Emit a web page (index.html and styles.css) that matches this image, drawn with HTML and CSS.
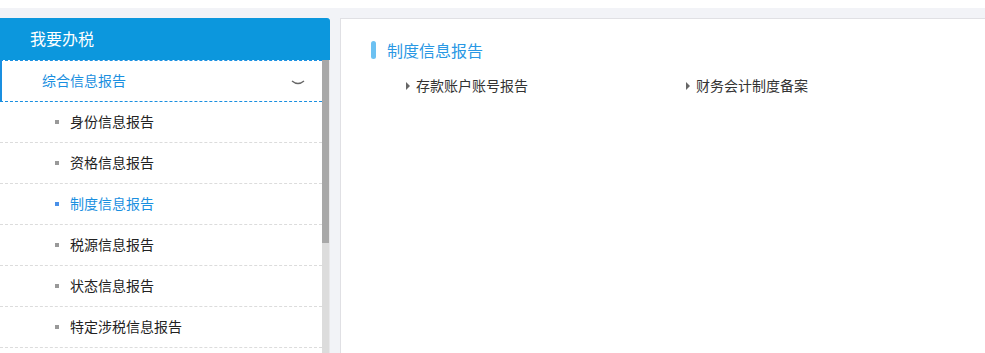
FILE: index.html
```html
<!DOCTYPE html>
<html lang="zh-CN">
<head>
    <meta charset="UTF-8">
    <meta name="viewport" content="width=device-width, initial-scale=1.0">
    <title>我要办税</title>
    <link rel="stylesheet" href="styles.css">
</head>
<body>
    <div class="topbar"></div>
    <div class="main">
        <aside class="side">
            <div class="side-head">我要办税</div>
            <div class="side-body">
                <ul class="menu">
                    <li class="group open">
                        <div class="group-title">
                            <span>综合信息报告</span>
                            <svg class="chevron" width="14" height="8" viewBox="0 0 14 8"><path d="M1 2 Q7 7 13 2" fill="none" stroke="#666" stroke-width="1.4"/></svg>
                        </div>
                        <ul class="sub">
                            <li><i class="dot"></i><span>身份信息报告</span></li>
                            <li><i class="dot"></i><span>资格信息报告</span></li>
                            <li class="active"><i class="dot"></i><span>制度信息报告</span></li>
                            <li><i class="dot"></i><span>税源信息报告</span></li>
                            <li><i class="dot"></i><span>状态信息报告</span></li>
                            <li><i class="dot"></i><span>特定涉税信息报告</span></li>
                        </ul>
                    </li>
                </ul>
                <div class="scroll"><div class="thumb"></div></div>
            </div>
        </aside>
        <section class="content">
            <h2 class="content-title"><i class="bar"></i>制度信息报告</h2>
            <ul class="links">
                <li><i class="tri"></i><span>存款账户账号报告</span></li>
                <li><i class="tri"></i><span>财务会计制度备案</span></li>
            </ul>
        </section>
    </div>
</body>
</html>
```
FILE: styles.css
```css
html, body { margin: 0; padding: 0; height: 100%; }
body { font-family: "Noto Sans CJK SC", "Noto Sans", sans-serif; background-color: #f2f3f7; overflow: hidden; }
ul { list-style: none; margin: 0; padding: 0; }
.topbar { height: 8px; background-color: #fff; }
.main { display: flex; gap: 10px; padding-top: 10px; height: calc(100vh - 18px); }
.side { width: 330px; display: flex; flex-direction: column; background-color: #fff; }
.side-head { height: 42px; line-height: 40px; padding-left: 30px; background-color: #0c97dd; color: #fff; font-size: 16px; border-top-right-radius: 3px; }
.side-body { flex: 1; display: flex; min-height: 0; }
.menu { flex: 1; }
.group-title { display: flex; align-items: center; justify-content: space-between; height: 40px; padding: 0 17px 0 40px; border-left: 2px solid #1a8fe0; border-top: 1px dashed #1a8fe0; border-bottom: 1px dashed #1a8fe0; color: #1a8fe0; font-size: 14px; }
.group-title span { margin-top: -2px; }
.chevron { margin-top: 4px; }
.sub li { display: flex; align-items: center; height: 40px; padding-left: 55px; border-bottom: 1px dashed #dcdcdc; font-size: 14px; color: #222; }
.sub li span { margin-top: -2px; }
.sub li.active { color: #1a8fe0; }
.dot { width: 4px; height: 4px; margin-right: 11px; background-color: #999; }
.sub li.active .dot { background-color: #4a90e8; }
.scroll { width: 7px; background-color: #dcdcdc; border-right: 1px solid #e8e8ea; }
.thumb { height: 183px; background-color: #a8a8a8; }
.content { flex: 1; background-color: #fff; border: 1px solid #e0e0e4; border-bottom: none; border-right: none; padding: 22px 0 0 30px; }
.content-title { display: flex; align-items: center; margin: 0; height: 18px; font-size: 16px; font-weight: normal; color: #2a98e4; }
.bar { width: 5px; height: 18px; margin-right: 11px; border-radius: 3px; background-color: #6cc1f2; }
.links { display: flex; margin-top: 18px; padding-left: 35px; }
.links li { display: flex; align-items: center; width: 280px; font-size: 14px; color: #333; }
.links li span { margin-top: -2px; }
.tri { width: 0; height: 0; margin-right: 6px; border-top: 4px solid transparent; border-bottom: 4px solid transparent; border-left: 4px solid #666; }
```
